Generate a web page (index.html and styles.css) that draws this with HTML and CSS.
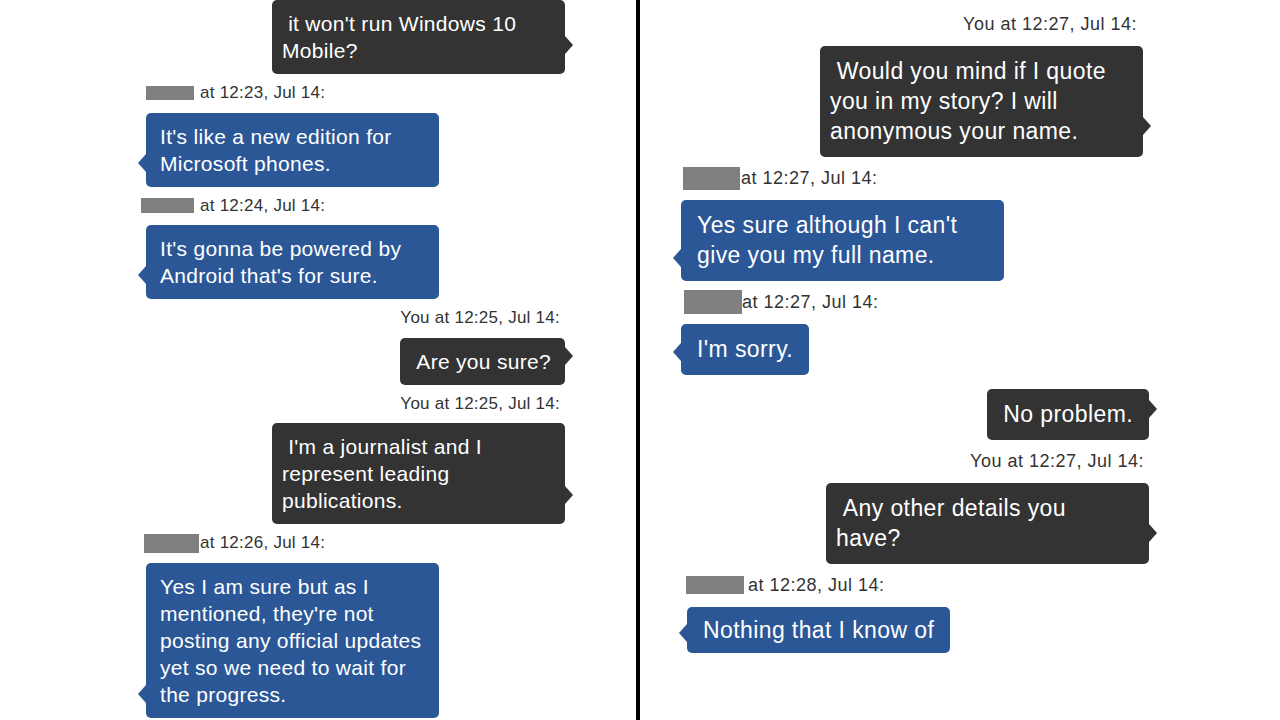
FILE: index.html
```html
<!DOCTYPE html>
<html lang="en">
<head>
<meta charset="utf-8">
<title>Chat transcript</title>
<link rel="stylesheet" href="styles.css">
</head>
<body>
<div class="page">
  <section class="panel panel-left">
    <div class="bubble out">&nbsp;it won't run Windows 10 Mobile?</div>

    <div class="meta"><span class="redact r1"></span>at 12:23, Jul 14:</div>
    <div class="bubble in">It's like a new edition for Microsoft phones.</div>

    <div class="meta"><span class="redact r2"></span>at 12:24, Jul 14:</div>
    <div class="bubble in">It's gonna be powered by Android that's for sure.</div>

    <div class="meta you">You at 12:25, Jul 14:</div>
    <div class="bubble out">&nbsp;Are you sure?</div>

    <div class="meta you">You at 12:25, Jul 14:</div>
    <div class="bubble out">&nbsp;I'm a journalist and I represent leading publications.</div>

    <div class="meta"><span class="redact r3"></span>at 12:26, Jul 14:</div>
    <div class="bubble in">Yes I am sure but as I mentioned, they're not posting any official updates yet so we need to wait for the progress.</div>
  </section>

  <div class="divider"></div>

  <section class="panel panel-right">
    <div class="meta you you-top">You at 12:27, Jul 14:</div>
    <div class="bubble out out-top">&nbsp;Would you mind if I quote you in my story? I will anonymous your name.</div>

    <div class="meta"><span class="redact r4"></span>at 12:27, Jul 14:</div>
    <div class="bubble in">Yes sure although I can't give you my full name.</div>

    <div class="meta"><span class="redact r5"></span>at 12:27, Jul 14:</div>
    <div class="bubble in">I'm sorry.</div>

    <div class="bubble out spaced">&nbsp;No problem.</div>

    <div class="meta you">You at 12:27, Jul 14:</div>
    <div class="bubble out">&nbsp;Any other details you have?</div>

    <div class="meta"><span class="redact r6"></span>at 12:28, Jul 14:</div>
    <div class="bubble in tight">Nothing that I know of</div>
  </section>
</div>
</body>
</html>
```

FILE: styles.css
```css
html, body {
  margin: 0;
  padding: 0;
  background: #ffffff;
}

body {
  font-family: "Liberation Sans", Arial, sans-serif;
  color: #333333;
}

.page {
  display: flex;
  width: 1280px;
  height: 720px;
  overflow: hidden;
  background: #ffffff;
}

.panel {
  display: flex;
  flex-direction: column;
  box-sizing: border-box;
  height: 720px;
  overflow: hidden;
}

.panel-left {
  width: 636px;
  padding: 0 71px 0 146px;
  font-size: 21px;
  letter-spacing: 0.3px;
}

.divider {
  width: 4px;
  flex: 0 0 4px;
  background: #000000;
}

.panel-right {
  width: 640px;
  padding: 3px 131px 0 41px;
  font-size: 23px;
  letter-spacing: 0.4px;
}

/* bubbles */
.bubble {
  position: relative;
  box-sizing: border-box;
  color: #ffffff;
  border-radius: 5px;
  flex: 0 0 auto;
}

.bubble.out {
  align-self: flex-end;
  background: #333333;
}

.bubble.in {
  align-self: flex-start;
  background: #2b5797;
}

.bubble::after {
  content: "";
  position: absolute;
  border-style: solid;
  width: 0;
  height: 0;
}

.bubble.out::after {
  right: -8px;
  border-width: 9px 0 9px 8px;
  border-color: transparent transparent transparent #333333;
}

.bubble.in::after {
  left: -8px;
  border-width: 9px 8px 9px 0;
  border-color: transparent #2b5797 transparent transparent;
}

.panel-left .bubble {
  max-width: 293px;
  line-height: 27px;
  padding: 10px 14px 10px 14px;
}

.panel-left .bubble.out {
  padding-left: 10px;
}

.panel-left .bubble.out::after {
  bottom: 20px;
}

.panel-left .bubble.in::after {
  bottom: 15px;
}

.panel-right .bubble {
  max-width: 323px;
  line-height: 30px;
  padding: 10px 16px 11px 16px;
}

.panel-right .bubble.out {
  padding-left: 10px;
}

.panel-right .bubble.out::after {
  bottom: 22px;
}

.panel-right .bubble.in::after {
  bottom: 14px;
}

.panel-right .bubble.out-top {
  margin-right: 6px;
}

.panel-right .bubble.spaced {
  margin-top: 14px;
}

.panel-right .bubble.tight {
  padding-top: 8px;
  padding-bottom: 8px;
  margin-left: 6px;
}

.panel-right .bubble.tight::after {
  bottom: 11px;
}

/* meta lines */
.meta {
  display: flex;
  align-items: center;
  white-space: nowrap;
  color: #333333;
  flex: 0 0 auto;
}

.panel-left .meta {
  font-size: 17px;
  letter-spacing: 0.25px;
  line-height: 20px;
  height: 20px;
  margin: 9px 0 9.5px;
}

.panel-right .meta {
  font-size: 18px;
  letter-spacing: 0.5px;
  line-height: 22px;
  height: 22px;
  margin: 10px 0 11px;
}

.meta.you {
  align-self: flex-end;
  margin-right: 5px;
}

.panel-right .meta.you-top {
  margin-right: 12px;
}

.redact {
  display: inline-block;
  background: #808080;
  flex: 0 0 auto;
}

.r1 { width: 48px; height: 14px; margin-right: 6px; }
.r2 { width: 53px; height: 15px; margin-left: -5px; margin-right: 6px; }
.r3 { width: 55px; height: 19px; margin-left: -2px; margin-right: 1px; }
.r4 { width: 57px; height: 23px; margin-left: 2px; margin-right: 1px; }
.r5 { width: 58px; height: 24px; margin-left: 3px; margin-right: 0; }
.r6 { width: 58px; height: 18px; margin-left: 5px; margin-right: 4px; }
```
